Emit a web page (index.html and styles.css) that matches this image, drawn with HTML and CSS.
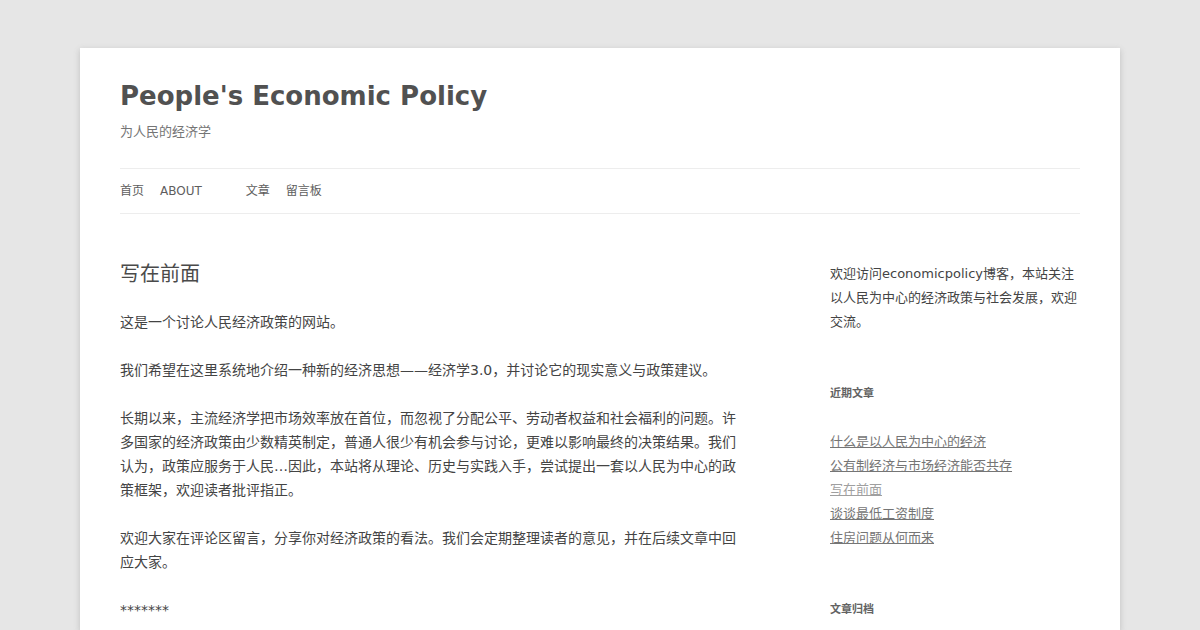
FILE: index.html
```html
<!DOCTYPE html>
<html lang="zh-CN">
<head>
  <meta charset="UTF-8" />
  <meta name="viewport" content="width=device-width, initial-scale=1.0"/>
  <title>People's Economic Policy</title>
  <link rel="stylesheet" href="styles.css">
</head>
<body>
  <div class="site">
    <header class="site-header">
      <h1 class="site-title"><a href="#">People's Economic Policy</a></h1>
      <h2 class="site-description">为人民的经济学</h2>

      <nav class="main-navigation">
        <ul class="nav-menu">
          <li><a href="#">首页</a></li>
          <li class="has-sub"><a href="#">About</a></li>
          <li><a href="#">文章</a></li>
          <li><a href="#">留言板</a></li>
        </ul>
      </nav>
    </header>

    <div class="main">
      <div class="site-content">
        <article class="post">
          <h1 class="entry-title">写在前面</h1>
          <div class="entry-content">
            <p>这是一个讨论人民经济政策的网站。</p>
            <p>我们希望在这里系统地介绍一种新的经济思想——经济学3.0，并讨论它的现实意义与政策建议。</p>
            <p>长期以来，主流经济学把市场效率放在首位，而忽视了分配公平、劳动者权益和社会福利的问题。许多国家的经济政策由少数精英制定，普通人很少有机会参与讨论，更难以影响最终的决策结果。我们认为，政策应服务于人民…因此，本站将从理论、历史与实践入手，尝试提出一套以人民为中心的政策框架，欢迎读者批评指正。</p>
            <p>欢迎大家在评论区留言，分享你对经济政策的看法。我们会定期整理读者的意见，并在后续文章中回应大家。</p>
            <p>*******</p>
          </div>
        </article>
      </div>

      <!-- Sidebar -->
      <aside class="widget-area">
        <div class="widget">
          <p class="textwidget">欢迎访问economicpolicy博客，本站关注以人民为中心的经济政策与社会发展，欢迎交流。</p>
        </div>
        <div class="widget">
          <h3 class="widget-title">近期文章</h3>
          <ul>
            <li><a href="#">什么是以人民为中心的经济</a></li>
            <li><a href="#">公有制经济与市场经济能否共存</a></li>
            <li><a href="#" class="visited">写在前面</a></li>
            <li><a href="#">谈谈最低工资制度</a></li>
            <li><a href="#">住房问题从何而来</a></li>
          </ul>
        </div>
        <div class="widget">
          <h3 class="widget-title">文章归档</h3>
        </div>
      </aside>
    </div>
  </div>
</body>
</html>
```

FILE: styles.css
```css
* {
  box-sizing: border-box;
}
body {
  margin: 0;
  font-family: "DejaVu Sans", "Noto Sans CJK SC", sans-serif;
  font-size: 14px;
  line-height: 24px;
  color: #444;
  background: #e6e6e6;
}
a {
  color: inherit;
  text-decoration: none;
}
.site {
  max-width: 1040px;
  margin: 48px auto 0;
  padding: 0 40px;
  background: #fff;
  box-shadow: 0 2px 6px rgba(100, 100, 100, 0.3);
  overflow: hidden;
  height: 582px;
}

/* Header */
.site-header {
  padding: 24px 0;
}
.site-title {
  margin: 0;
  font-size: 26px;
  line-height: 48px;
  font-weight: bold;
}
.site-title a {
  color: #515151;
}
.site-description {
  margin: 0;
  font-size: 13px;
  line-height: 24px;
  font-weight: normal;
  color: #757575;
}
.main-navigation {
  margin-top: 24px;
}
.nav-menu {
  display: flex;
  margin: 0;
  padding: 0;
  list-style: none;
  border-top: 1px solid #ededed;
  border-bottom: 1px solid #ededed;
}
.nav-menu li {
  margin-right: 16px;
  font-size: 12px;
  line-height: 44px;
  text-transform: uppercase;
}
.nav-menu li.has-sub {
  margin-right: 44px;
}
.nav-menu a {
  color: #5e5e5e;
}

/* Content */
.main {
  display: flex;
  justify-content: space-between;
  margin-top: 24px;
}
.site-content {
  width: 65.104%;
}
.entry-title {
  margin: 0 0 24px;
  font-size: 20px;
  line-height: 24px;
  font-weight: normal;
  color: #4a4a4a;
}
.entry-content p {
  margin: 0 0 24px;
}

/* Sidebar */
.widget-area {
  width: 26.042%;
  font-size: 13px;
  line-height: 24px;
}
.widget {
  margin-bottom: 48px;
}
.textwidget {
  margin: 0;
}
.widget-title {
  margin: 0 0 24px;
  font-size: 11px;
  line-height: 24px;
  font-weight: bold;
  text-transform: uppercase;
  color: #636363;
}
.widget ul {
  margin: 0;
  padding: 0;
  list-style: none;
}
.widget li a {
  color: #757575;
  text-decoration: underline;
}
.widget li a.visited {
  color: #9f9f9f;
}
```
